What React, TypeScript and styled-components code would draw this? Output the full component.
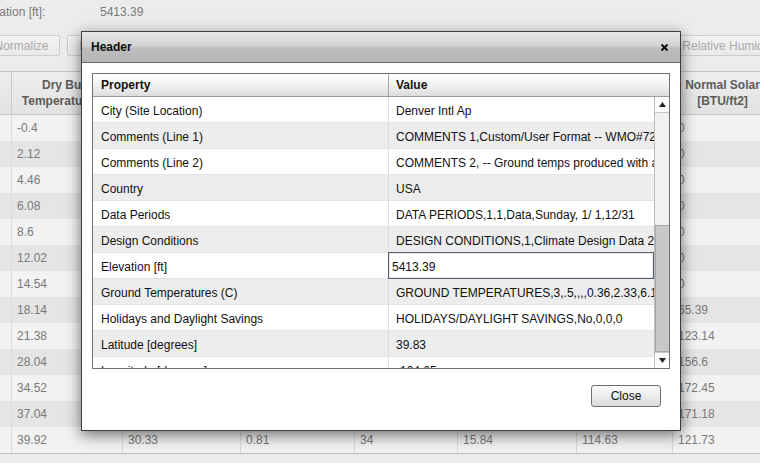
import React from 'react';
import styled, { createGlobalStyle } from 'styled-components';

const colWidths = [44, 111, 118, 114, 103, 119, 96, 100];
const colTemplate = colWidths.map((w) => `${w}px`).join(' ');

const gridHeaders = [
  ['', ''],
  ['Dry Bulb', 'Temperature [F]'],
  ['Dew Point', 'Temperature [F]'],
  ['Relative', 'Humidity [%]'],
  ['Wind Speed', '[mph]'],
  ['Horizontal IR', '[BTU/ft2]'],
  ['Global Solar', '[BTU/ft2]'],
  ['Normal Solar', '[BTU/ft2]'],
];

const gridData = [
  ['1', '-0.4', '-9.4', '0.66', '8', '0', '0', '0'],
  ['2', '2.12', '-7.6', '0.63', '7', '0', '0', '0'],
  ['3', '4.46', '-5.8', '0.61', '7', '0', '0', '0'],
  ['4', '6.08', '-4.0', '0.63', '6', '0', '0', '0'],
  ['5', '8.6', '-1.3', '0.64', '6', '0', '0', '0'],
  ['6', '12.02', '2.3', '0.65', '5', '0', '0', '0'],
  ['7', '14.54', '5.0', '0.66', '5', '0', '0', '0'],
  ['8', '18.14', '9.5', '0.68', '5', '1.32', '12.6', '65.39'],
  ['9', '21.38', '14.0', '0.72', '6', '5.84', '48.2', '123.14'],
  ['10', '28.04', '19.4', '0.76', '8', '9.91', '82.7', '156.6'],
  ['11', '34.52', '24.8', '0.79', '11', '12.77', '101.4', '172.45'],
  ['12', '37.04', '28.1', '0.80', '24', '14.36', '112.9', '171.18'],
  ['13', '39.92', '30.33', '0.81', '34', '15.84', '114.63', '121.73'],
];

const toolButtons = [
  { label: 'Normalize', width: 77 },
  { label: 'Normalize All', width: 95 },
  { label: 'Shift Values', width: 140 },
  { label: 'Scale Values', width: 140 },
  { label: 'Dew Point Temperature', width: 199 },
  { label: 'Relative Humidity', width: 120 },
];

const properties = [
  ['City (Site Location)', 'Denver Intl Ap'],
  ['Comments (Line 1)', 'COMMENTS 1,Custom/User Format -- WMO#725650; Custom/User Format'],
  ['Comments (Line 2)', 'COMMENTS 2, -- Ground temps produced with a standard soil diffusivity'],
  ['Country', 'USA'],
  ['Data Periods', 'DATA PERIODS,1,1,Data,Sunday, 1/ 1,12/31'],
  ['Design Conditions', 'DESIGN CONDITIONS,1,Climate Design Data 2009 ASHRAE Handbook'],
  ['Elevation [ft]', '5413.39'],
  ['Ground Temperatures (C)', 'GROUND TEMPERATURES,3,.5,,,,0.36,2.33,6.17,10.60'],
  ['Holidays and Daylight Savings', 'HOLIDAYS/DAYLIGHT SAVINGS,No,0,0,0'],
  ['Latitude [degrees]', '39.83'],
  ['Longitude [degrees]', '-104.65'],
];

const editingRow = 6;

const GlobalStyle = createGlobalStyle`
  html, body {
    margin: 0;
    padding: 0;
  }

  body {
    background: #ececec;
    font-family: 'Liberation Sans', Arial, sans-serif;
    font-size: 12px;
    overflow: hidden;
  }
`;

const App = () => {
  return (
    <Page>
      <GlobalStyle />
      <ScrolledContent>
        <InfoRow>
          <span>Elevation [ft]:</span>
          <span>5413.39</span>
        </InfoRow>
        <Toolbar>
          {toolButtons.map((b) => (
            <ToolButton key={b.label} $width={b.width}>
              {b.label}
            </ToolButton>
          ))}
        </Toolbar>
        <Grid>
          <GridHeader>
            {gridHeaders.map(([a, b], i) => (
              <GridHeaderCell key={i}>
                {a}
                {b && <br />}
                {b}
              </GridHeaderCell>
            ))}
          </GridHeader>
          {gridData.map((row, i) => (
            <GridRow key={row[0]} $odd={i % 2 === 1}>
              {row.map((v, j) => (
                <GridCell key={j}>{v}</GridCell>
              ))}
            </GridRow>
          ))}
        </Grid>
      </ScrolledContent>

      <Dialog>
        <TitleBar>
          <Title>Header</Title>
          <CloseIcon aria-label="close">
            <svg width="7" height="7" viewBox="0 0 7 7">
              <path d="M0.5 0.5 L6.5 6.5 M6.5 0.5 L0.5 6.5" stroke="#111" strokeWidth="2" />
            </svg>
          </CloseIcon>
        </TitleBar>
        <DialogBody>
          <PropTable>
            <TableHeader>
              <TableHeaderCell>Property</TableHeaderCell>
              <TableHeaderCell $last>Value</TableHeaderCell>
            </TableHeader>
            <TableBody>
              <RowArea>
                {properties.map(([k, v], i) => (
                  <PropRow key={k} $odd={i % 2 === 1}>
                    <NameCell>{k}</NameCell>
                    {i === editingRow ? (
                      <EditCell>
                        <EditInput defaultValue={v} autoFocus />
                      </EditCell>
                    ) : (
                      <ValueCell>{v}</ValueCell>
                    )}
                  </PropRow>
                ))}
              </RowArea>
              <ScrollBar>
                <ScrollButton>
                  <svg width="7" height="5" viewBox="0 0 7 5">
                    <polygon points="3.5,0 7,5 0,5" fill="#222" />
                  </svg>
                </ScrollButton>
                <ScrollTrack>
                  <ScrollSpacer />
                  <ScrollThumb />
                </ScrollTrack>
                <ScrollButton $down>
                  <svg width="7" height="5" viewBox="0 0 7 5">
                    <polygon points="0,0 7,0 3.5,5" fill="#222" />
                  </svg>
                </ScrollButton>
              </ScrollBar>
            </TableBody>
          </PropTable>
        </DialogBody>
        <ButtonPane>
          <CloseButton>Close</CloseButton>
        </ButtonPane>
      </Dialog>
    </Page>
  );
};

const Page = styled.div`
  position: relative;
  width: 760px;
  height: 463px;
  overflow: hidden;
  background: #ececec;
`;

// the grid is scrolled 32px to the right
const ScrolledContent = styled.div`
  margin-left: -32px;
  width: 900px;
`;

const InfoRow = styled.div`
  display: grid;
  grid-template-columns: 124px auto;
  align-items: center;
  height: 24px;
  padding-left: 8px;
  color: #7a7a7a;
`;

const Toolbar = styled.div`
  display: flex;
  gap: 7px;
  margin-top: 11px;
  padding-left: 15px;
`;

const ToolButton = styled.button<{ $width: number }>`
  flex: none;
  width: ${({ $width }) => $width}px;
  height: 21px;
  padding: 0;
  border: 1px solid #cdcdcd;
  border-radius: 2px;
  background: linear-gradient(#f3f3f3, #e9e9e9);
  color: #ababab;
  font-family: 'Liberation Sans', Arial, sans-serif;
  font-size: 12px;
  white-space: nowrap;
`;

const Grid = styled.div`
  margin-top: 15px;
  border-top: 1px solid #c2c2c2;
  border-bottom: 1px solid #c2c2c2;
`;

const GridHeader = styled.div`
  display: grid;
  grid-template-columns: ${colTemplate};
  height: 42px;
  border-bottom: 1px solid #c8c8c8;
  background: linear-gradient(#eeeeee, #e2e2e2);
`;

const GridHeaderCell = styled.div`
  display: flex;
  align-items: center;
  justify-content: center;
  border-right: 1px solid #cacaca;
  color: #5c5c5c;
  font-weight: bold;
  line-height: 16px;
  text-align: center;
  white-space: nowrap;
  overflow: hidden;
`;

const GridRow = styled.div<{ $odd: boolean }>`
  display: grid;
  grid-template-columns: ${colTemplate};
  height: 26px;
  background: ${({ $odd }) => ($odd ? '#e5e5e5' : '#f2f2f2')};
`;

const GridCell = styled.div`
  padding-left: 5px;
  border-right: 1px solid #dadada;
  color: #7a7a7a;
  line-height: 26px;
  white-space: nowrap;
  overflow: hidden;
`;

const Dialog = styled.div`
  position: absolute;
  left: 81px;
  top: 31px;
  width: 600px;
  height: 400px;
  box-sizing: border-box;
  display: flex;
  flex-direction: column;
  border: 1px solid #3e3e3e;
  background: #fff;
  box-shadow: 0 4px 14px rgba(0, 0, 0, 0.55);
  color: #111;
`;

const TitleBar = styled.div`
  display: flex;
  align-items: center;
  justify-content: space-between;
  height: 30px;
  padding: 0 12px 0 9px;
  border-bottom: 1px solid #6a6a6a;
  background: linear-gradient(#e6e6e6 0%, #d2d2d2 45%, #bdbdbd 55%, #b4b4b4 100%);
`;

const Title = styled.span`
  font-weight: bold;
  font-size: 12px;
`;

const CloseIcon = styled.span`
  display: flex;
  margin-top: 1px;
`;

const DialogBody = styled.div`
  padding: 10px 10px 0;
`;

const PropTable = styled.div`
  border: 1px solid #707070;
`;

const TableHeader = styled.div`
  display: grid;
  grid-template-columns: 296px 1fr;
  height: 22px;
  border-bottom: 1px solid #9a9a9a;
  background: linear-gradient(#ffffff, #f2f2f2 50%, #dcdcdc);
`;

const TableHeaderCell = styled.div<{ $last?: boolean }>`
  padding-left: ${({ $last }) => ($last ? '7px' : '8px')};
  border-right: ${({ $last }) => ($last ? 'none' : '1px solid #a8a8a8')};
  font-weight: bold;
  line-height: 22px;
`;

const TableBody = styled.div`
  display: flex;
  height: 271px;
  overflow: hidden;
`;

const RowArea = styled.div`
  flex: 1;
  min-width: 0;
`;

const PropRow = styled.div<{ $odd: boolean }>`
  display: grid;
  grid-template-columns: 296px 1fr;
  height: 26px;
  box-sizing: border-box;
  border-bottom: 1px solid #e4e4e4;
  background: ${({ $odd }) => ($odd ? '#ededed' : '#ffffff')};
`;

const NameCell = styled.div`
  padding: 3px 0 0 8px;
  border-right: 1px solid #dedede;
  line-height: 22px;
  white-space: nowrap;
  overflow: hidden;
`;

const ValueCell = styled.div`
  padding: 3px 0 0 7px;
  line-height: 22px;
  white-space: nowrap;
  overflow: hidden;
`;

const EditCell = styled.div`
  display: flex;
`;

const EditInput = styled.input`
  box-sizing: border-box;
  width: calc(100% + 1px);
  height: 27px;
  margin: -1px 0 0 -1px;
  padding: 2px 0 0 3px;
  border: 1px solid #5e5e5e;
  box-shadow: inset 0 0 0 1px rgba(150, 190, 235, 0.35);
  outline: none;
  background: #fff;
  color: #111;
  font-family: 'Liberation Sans', Arial, sans-serif;
  font-size: 12px;
`;

const ScrollBar = styled.div`
  display: flex;
  flex-direction: column;
  width: 14px;
  border-left: 1px solid #bdbdbd;
  background: #f1f1f1;
`;

const ScrollButton = styled.div<{ $down?: boolean }>`
  display: flex;
  align-items: center;
  justify-content: center;
  height: 15px;
  background: #fbfbfb;
  border-${({ $down }) => ($down ? 'top' : 'bottom')}: 1px solid #c6c6c6;
`;

const ScrollTrack = styled.div`
  display: flex;
  flex-direction: column;
  flex: 1;
`;

const ScrollSpacer = styled.div`
  height: 112px;
`;

const ScrollThumb = styled.div`
  flex: 1;
  border: 1px solid #a6a6a6;
  border-right: none;
  background: #c8c8c8;
`;

const ButtonPane = styled.div`
  display: flex;
  justify-content: flex-end;
  padding: 16px 19px 0;
`;

const CloseButton = styled.button`
  width: 70px;
  height: 22px;
  padding: 0;
  border: 1px solid #707070;
  border-radius: 3px;
  background: linear-gradient(#fbfbfb, #ececec 50%, #dcdcdc);
  color: #111;
  font-family: 'Liberation Sans', Arial, sans-serif;
  font-size: 12px;
`;

export default App;
